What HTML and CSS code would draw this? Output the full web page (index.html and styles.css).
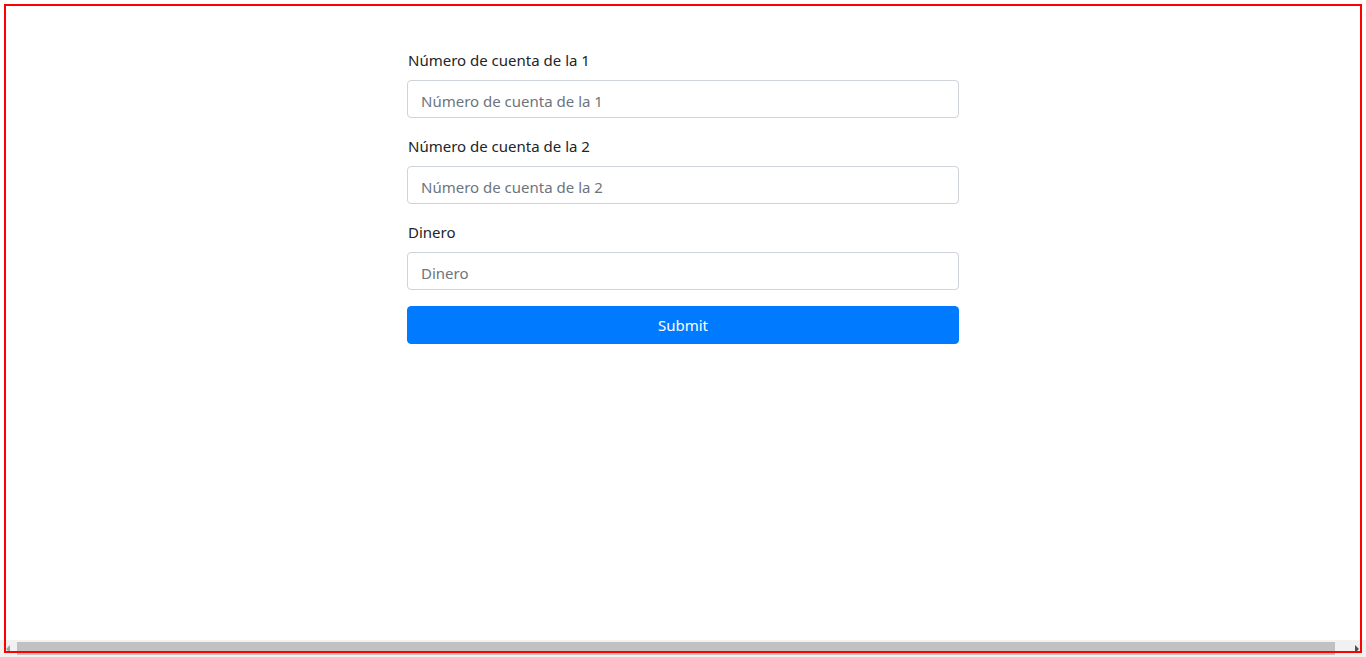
FILE: index.html
```html
<!DOCTYPE html>
<html lang="es">
<head>
<meta charset="utf-8">
<title>Transferencia</title>
<link rel="stylesheet" href="styles.css">
</head>
<body>
<main class="page">
  <form class="transfer-form">
    <div class="form-group">
      <label class="form-label" for="c1">Número de cuenta de la 1</label>
      <input class="form-control" id="c1" type="text" placeholder="Número de cuenta de la 1">
    </div>
    <div class="form-group">
      <label class="form-label" for="c2">Número de cuenta de la 2</label>
      <input class="form-control" id="c2" type="text" placeholder="Número de cuenta de la 2">
    </div>
    <div class="form-group">
      <label class="form-label" for="dinero">Dinero</label>
      <input class="form-control" id="dinero" type="text" placeholder="Dinero">
    </div>
    <button class="btn-submit" type="button">Submit</button>
  </form>
</main>
<div class="hscroll">
  <span class="arrow arrow-left"></span>
  <div class="thumb"></div>
  <span class="arrow arrow-right"></span>
</div>
<div class="frame"></div>
</body>
</html>
```
FILE: styles.css
```css
html, body {
  margin: 0;
  padding: 0;
  background: #fff;
  overflow: hidden;
}
body {
  font-family: "Noto Sans", "Segoe UI", Arial, sans-serif;
  font-size: 15px;
  line-height: 24px;
  color: #212529;
  height: 657px;
}
.page {
  display: flex;
  justify-content: center;
  padding-top: 48px;
}
.transfer-form {
  width: 552px;
}
.form-group {
  margin-bottom: 16px;
}
.form-label {
  display: block;
  margin-bottom: 8px;
  padding-left: 1px;
  height: 24px;
}
.form-control {
  display: block;
  box-sizing: border-box;
  width: 100%;
  height: 38px;
  padding: 8px 12px 4px 13px;
  font: inherit;
  line-height: 24px;
  color: #495057;
  background: #fff;
  border: 1px solid #ced4da;
  border-radius: 4px;
  outline: none;
}
.form-control::placeholder {
  color: #6c757d;
  opacity: 1;
}
.btn-submit {
  display: block;
  width: 100%;
  height: 38px;
  padding: 5px 12px 5px;
  font: inherit;
  line-height: 24px;
  color: #fff;
  background: #007bff;
  border: 1px solid #007bff;
  border-radius: 4px;
}
.hscroll {
  position: fixed;
  left: 0;
  right: 0;
  bottom: 0;
  height: 17px;
  background: #f1f1f1;
  display: flex;
  align-items: center;
}
.thumb {
  margin-left: 7px;
  width: 1318px;
  height: 13px;
  background: #c1c1c1;
}
.arrow {
  width: 0;
  height: 0;
  border-top: 4px solid transparent;
  border-bottom: 4px solid transparent;
}
.arrow-left {
  margin-left: 6px;
  border-right: 4px solid #a3a3a3;
}
.arrow-right {
  margin-left: 20px;
  border-left: 4px solid #505050;
}
.frame {
  position: fixed;
  left: 4px;
  top: 4px;
  width: 1358px;
  height: 649px;
  box-sizing: border-box;
  border: 2px solid #ff0000;
  pointer-events: none;
}
```
